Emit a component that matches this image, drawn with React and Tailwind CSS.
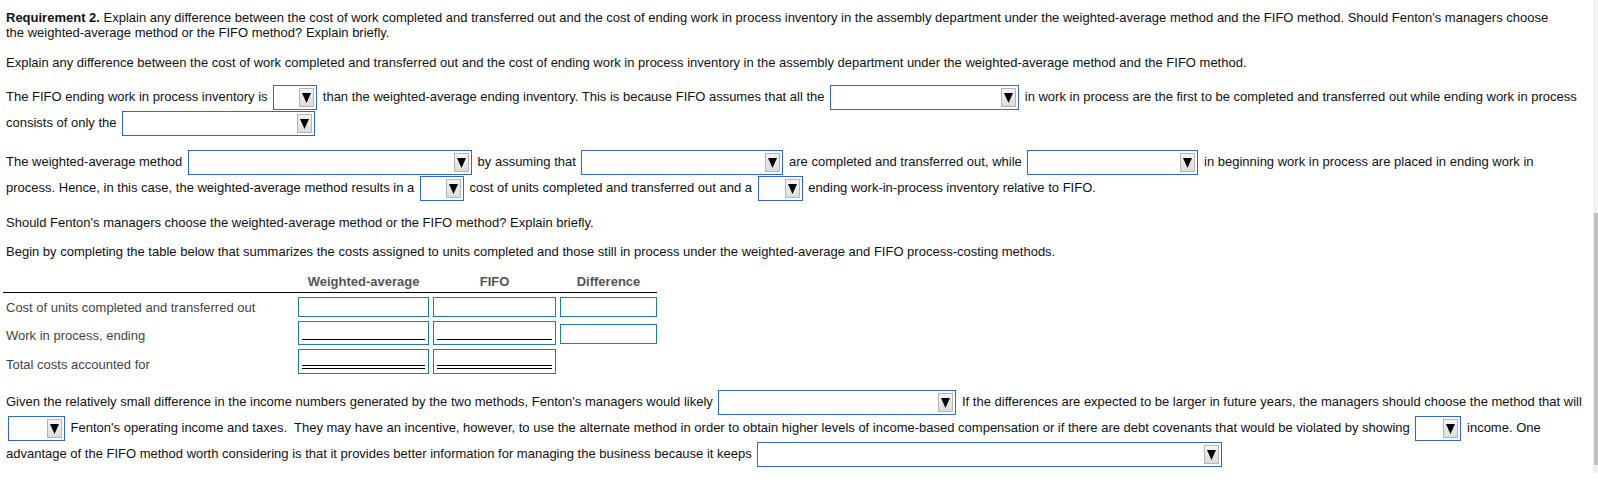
import React from "react";

function Select({ w }) {
  return (
    <span
      className={`inline-flex align-middle h-[25px] mx-[2px] border border-[#3366cc] bg-white justify-end items-stretch p-[2px] ${w}`}
    >
      <span className="w-[15px] flex items-center justify-center bg-gradient-to-b from-[#f4f4f4] to-[#dcdcdc] border border-[#b5b5b5]">
        <svg width="9" height="10" viewBox="0 0 9 10">
          <polygon points="0,0 9,0 4.5,10" fill="#000" />
        </svg>
      </span>
    </span>
  );
}

function Cell({ w, lines = 0, h = "h-[20px]", extra = "" }) {
  return (
    <div
      className={`${w} ${h} ${extra} border border-[#1d7f9c] bg-white flex flex-col justify-end gap-[2px] px-[3px] pb-[4px]`}
    >
      {lines >= 1 && <div className="h-px bg-black" />}
      {lines >= 2 && <div className="h-px bg-black" />}
    </div>
  );
}

function Row({ label, children, h }) {
  return (
    <div className="flex items-end mt-[4px]">
      <div className="w-[295px] pl-[3px] pb-[1px] leading-[16px] text-[#444]">{label}</div>
      <div className={`flex gap-[4px] items-end ${h}`}>{children}</div>
    </div>
  );
}

export default function App() {
  return (
    <div className="flex w-[1598px] h-[482px] bg-white overflow-hidden font-['Liberation_Sans',Arial,sans-serif] text-[13px] text-[#111]">
      <div className="flex-1 pl-[6px] pt-[10px]">
        <p className="leading-[15px] pr-[30px]">
          <b>Requirement 2.</b> Explain any difference between the cost of work completed and transferred out and the
          cost of ending work in process inventory in the assembly department under the weighted-average method and the
          FIFO method. Should Fenton's managers choose the weighted-average method or the FIFO method? Explain briefly.
        </p>

        <p className="leading-[16px] mt-[15px]">
          Explain any difference between the cost of work completed and transferred out and the cost of ending work in
          process inventory in the assembly department under the weighted-average method and the FIFO method.
        </p>

        <p className="leading-[26px] mt-[13px] pr-[8px]">
          The FIFO ending work in process inventory is <Select w="w-[44px]" /> than the weighted-average ending
          inventory. This is because FIFO assumes that all the <Select w="w-[189px]" /> in work in process are the
          first to be completed and transferred out while ending work in process consists of only the{" "}
          <Select w="w-[193px]" />
        </p>

        <p className="leading-[26px] mt-[13px] pr-[8px]">
          The weighted-average method <Select w="w-[284px]" /> by assuming that <Select w="w-[202px]" /> are completed
          and transferred out, while <Select w="w-[171px]" /> in beginning work in process are placed in ending work in
          process. Hence, in this case, the weighted-average method results in a <Select w="w-[44px]" /> cost of units
          completed and transferred out and a <Select w="w-[45px]" /> ending work-in-process inventory relative to
          FIFO.
        </p>

        <p className="leading-[16px] mt-[14px]">
          Should Fenton's managers choose the weighted-average method or the FIFO method? Explain briefly.
        </p>

        <p className="leading-[16px] mt-[13px]">
          Begin by completing the table below that summarizes the costs assigned to units completed and those still in
          process under the weighted-average and FIFO process-costing methods.
        </p>

        <div className="w-[654px] -ml-[3px] mt-[14px]">
          <div className="flex border-b border-black pb-[2px] leading-[16px] font-bold text-[#555]">
            <div className="w-[295px]" />
            <div className="flex gap-[4px]">
              <div className="w-[131px] text-center">Weighted-average</div>
              <div className="w-[123px] text-center">FIFO</div>
              <div className="w-[97px] text-center">Difference</div>
            </div>
          </div>
          <Row label="Cost of units completed and transferred out" h="h-[20px]">
            <Cell w="w-[131px]" />
            <Cell w="w-[123px]" />
            <Cell w="w-[97px]" />
          </Row>
          <Row label="Work in process, ending" h="h-[24px]">
            <Cell w="w-[131px]" h="h-[24px]" lines={1} />
            <Cell w="w-[123px]" h="h-[24px]" lines={1} />
            <Cell w="w-[97px]" h="h-[20px]" extra="mb-[1px]" />
          </Row>
          <Row label="Total costs accounted for" h="h-[25px]">
            <Cell w="w-[131px]" h="h-[25px]" lines={2} />
            <Cell w="w-[123px]" h="h-[25px]" lines={2} />
          </Row>
        </div>

        <p className="leading-[26px] mt-[15px] pr-[8px]">
          Given the relatively small difference in the income numbers generated by the two methods, Fenton's managers
          would likely <Select w="w-[238px]" /> If the differences are expected to be larger in future years, the
          managers should choose the method that will <Select w="w-[57px]" /> Fenton's operating income and
          taxes.&nbsp; They may have an incentive, however, to use the alternate method in order to obtain higher levels
          of income-based compensation or if there are debt covenants that would be violated by showing{" "}
          <Select w="w-[46px]" /> income. One advantage of the FIFO method worth considering is that it provides better
          information for managing the business because it keeps <Select w="w-[465px]" />
        </p>
      </div>

      <div className="w-[5px] h-[473px] bg-[#f1f1f1] flex flex-col">
        <div className="h-[213px]" />
        <div className="ml-[1px] h-[252px] bg-[#c1c1c1]" />
      </div>
    </div>
  );
}
